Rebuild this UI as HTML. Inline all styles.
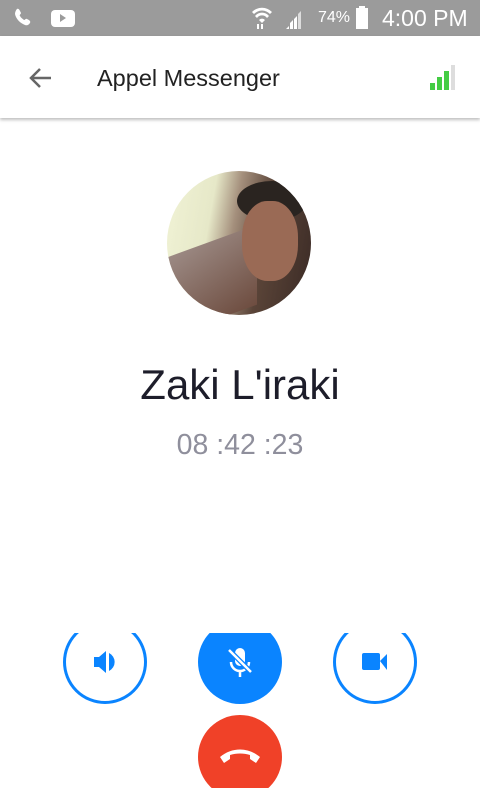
<!DOCTYPE html>
<html><head><style>
*{margin:0;padding:0;box-sizing:border-box}
body{width:480px;height:800px;background:#fff;font-family:"Liberation Sans",sans-serif;position:relative;overflow:hidden}
.sb{position:absolute;top:0;left:0;width:480px;height:36px;background:#9b9b9b;color:#fff}
.hdr{position:absolute;top:36px;left:0;width:480px;height:82px;background:#fff;box-shadow:0 2px 3px rgba(0,0,0,.25)}
.t{position:absolute;left:97px;top:29px;font-size:23.5px;color:#222}
.btn{position:absolute;width:84px;height:84px;border-radius:50%}
.clip{position:absolute;left:0;top:633px;width:480px;height:155px;overflow:hidden}
</style></head><body>
<div class="sb">
<svg width="480" height="36" style="position:absolute;left:0;top:0">
<path d="M17 9c2-1 3 2 4 4 0 1-2 2-1 3 1 2 3 3 4 4 1 0 2-2 3-1 2 1 4 2 3 4-1 1-2 3-5 2-5-2-9-6-10-11 0-2 1-4 2-5z" fill="#fff"/>
<rect x="51" y="10" width="24" height="17" rx="4" fill="#fff"/><path d="M60 14l6 4-6 4z" fill="#9b9b9b"/>
<path d="M252 12a14 14 0 0 1 20 0l-2 2a11 11 0 0 0-16 0zM255 16a9 9 0 0 1 14 0l-2 2a6 6 0 0 0-10 0zM259 20a4 4 0 0 1 6 0l-3 3z" fill="#fff"/>
<path d="M258 29v-5M262 24v5" stroke="#fff" stroke-width="2"/>
<path d="M286 29l3-3v3zM290 29v-6l3-3v9zM294 29v-10l3-3v13z" fill="#fff"/><path d="M298 29v-15l3-3v18z" fill="#ddd"/>
<rect x="356" y="8" width="12" height="21" fill="#fff"/><rect x="359" y="6" width="6" height="3" fill="#fff"/>
</svg>
<span style="position:absolute;left:318px;top:9px;font-size:16px">74%</span>
<span style="position:absolute;left:382px;top:5px;font-size:23px">4:00 PM</span>
</div>
<div class="hdr">
<svg width="30" height="30" style="position:absolute;left:27px;top:27px"><path d="M24 15H4M13 6l-9 9 9 9" stroke="#666" stroke-width="2.5" fill="none"/></svg>
<div class="t">Appel Messenger</div>
<svg width="40" height="30" style="position:absolute;left:425px;top:28px"><rect x="5" y="19" width="5" height="7" fill="#4c4"/><rect x="12" y="13" width="5" height="13" fill="#4c4"/><rect x="19" y="7" width="5" height="19" fill="#4c4"/><rect x="26" y="1" width="4" height="25" fill="#ddd"/></svg>
</div>
<div style="position:absolute;left:167px;top:171px;width:144px;height:144px;border-radius:50%;overflow:hidden;background:linear-gradient(100deg,#f1f3d6 0%,#e6e8c8 30%,#a48f7c 45%,#5a4438 65%,#3a2a25 100%)">
<div style="position:absolute;left:0;top:70px;width:90px;height:80px;background:linear-gradient(160deg,#9c8a84,#6e4d40);transform:skewY(-20deg)"></div>
<div style="position:absolute;left:70px;top:10px;width:70px;height:40px;border-radius:50%;background:#2a2420"></div>
<div style="position:absolute;left:75px;top:30px;width:56px;height:80px;border-radius:45%;background:#9a6a55"></div>
</div>
<div style="position:absolute;left:0;top:361px;width:480px;text-align:center;font-size:42px;color:#1d1d2a">Zaki L'iraki</div>
<div style="position:absolute;left:0;top:429px;width:480px;text-align:center;font-size:28.5px;color:#8f8f9c">08 :42 :23</div>
<div class="clip">
<div class="btn" style="left:63px;top:-13px;border:3px solid #0a84ff">
<svg width="78" height="78"><path d="M28 34h5l7-6v22l-7-6h-5z" fill="#0a84ff"/><path d="M43 30a10 10 0 0 1 0 18z" fill="#0a84ff"/></svg></div>
<div class="btn" style="left:198px;top:-13px;background:#0a84ff">
<svg width="84" height="84"><rect x="37" y="28" width="10" height="18" rx="5" fill="#fff"/><path d="M33 42a9 9 0 0 0 18 0M42 51v6" stroke="#fff" stroke-width="2.5" fill="none"/><path d="M31 30l22 22" stroke="#0a84ff" stroke-width="5"/><path d="M31 30l22 22" stroke="#fff" stroke-width="2.5"/></svg></div>
<div class="btn" style="left:333px;top:-13px;border:3px solid #0a84ff">
<svg width="78" height="78"><rect x="26" y="30" width="18" height="17" rx="2" fill="#0a84ff"/><path d="M44 38l7-7v16z" fill="#0a84ff"/></svg></div>
<div class="btn" style="left:198px;top:82px;background:#f04128">
<svg width="84" height="84"><path d="M22 42c12-10 28-10 40 0l-4 6-6-4v-4c-6-2-14-2-20 0v4l-6 4z" fill="#fff"/></svg></div>
</div>
</body></html>
